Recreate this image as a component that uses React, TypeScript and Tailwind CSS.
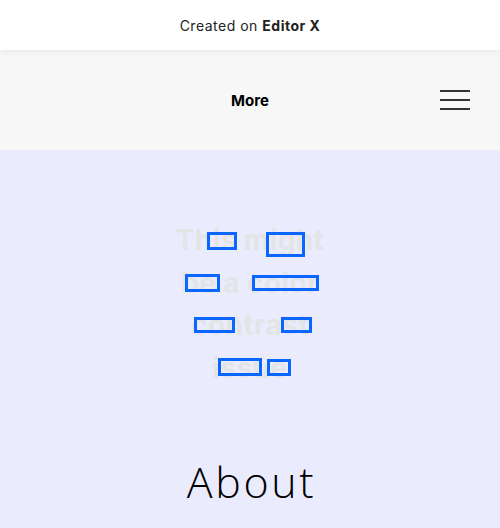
const boxes = [
  { l: 207, t: 82, w: 30, h: 18 },
  { l: 266, t: 82, w: 39, h: 25 },
  { l: 185, t: 124, w: 35, h: 18 },
  { l: 252, t: 125, w: 67, h: 16 },
  { l: 194, t: 167, w: 41, h: 16 },
  { l: 281, t: 167, w: 31, h: 16 },
  { l: 218, t: 208, w: 44, h: 18 },
  { l: 267, t: 209, w: 24, h: 17 },
];

function App() {
  return (
    <div className="w-[500px] h-[528px] overflow-hidden bg-[#eaecfd] font-['Open_Sans',sans-serif]">
      <div className="relative z-10 h-[50px] bg-white flex items-center justify-center shadow-[0_2px_6px_rgba(0,0,0,0.06)]">
        <span className="text-[14px] tracking-[0.5px] text-[#222] font-['Inter',sans-serif]">
          Created on <span className="font-bold">Editor X</span>
        </span>
      </div>

      <div className="h-[100px] bg-[#f7f7f7] flex items-center relative">
        <div className="flex-1 text-center">
          <span className="text-[15px] font-bold text-black font-['Inter',sans-serif]">More</span>
        </div>
        <div className="absolute right-[30px] top-[40px] w-[30px] flex flex-col gap-[7px]">
          <div className="h-[2px] bg-[#333]" />
          <div className="h-[2px] bg-[#333]" />
          <div className="h-[2px] bg-[#333]" />
        </div>
      </div>

      <div className="relative">
        <div className="pt-[69px] flex flex-col items-center text-[28px] leading-[42.5px] font-bold text-[#e4e4e6] font-['Inter',sans-serif] tracking-[0.4px]">
          <span>This might</span>
          <span>be a color</span>
          <span>contrast</span>
          <span>issue</span>
        </div>
        {boxes.map((b, i) => (
          <div
            key={i}
            className="absolute border-[3px] border-[#0a66ff]"
            style={{ left: b.l, top: b.t, width: b.w, height: b.h }}
          />
        ))}
        <div className="mt-[68px] pl-[3px] text-center text-[43px] leading-[50px] font-light tracking-[2.6px] text-black font-['Open_Sans',sans-serif]">
          About
        </div>
      </div>
    </div>
  );
}

export default App;
